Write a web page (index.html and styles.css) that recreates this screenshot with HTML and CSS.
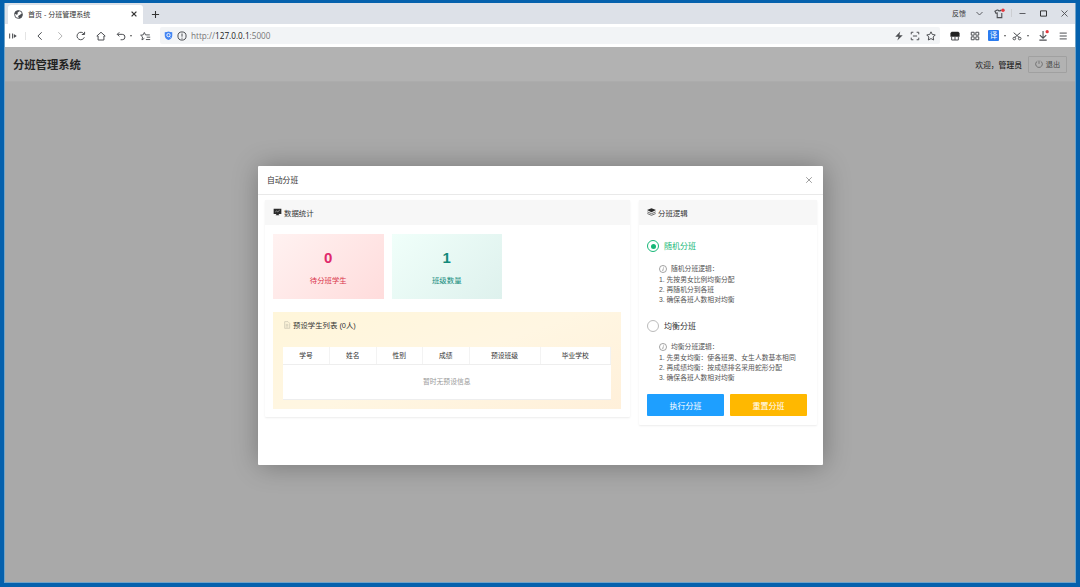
FILE: index.html
```html
<!DOCTYPE html>
<html lang="zh-CN">
<head>
  <meta charset="UTF-8">
  <title>首页 - 分班管理系统</title>
  <link rel="stylesheet" href="styles.css">
</head>
<body>
  <div class="window">
    <div class="tab-bar">
      <div class="tab">
        <svg class="favicon" viewBox="0 0 16 16"><circle cx="8" cy="8" r="7" fill="#fff" stroke="#4a4d52" stroke-width="1.6"/><path fill="#4a4d52" stroke="none" d="M1 7c2 0 3 2 5 1 2-2-1-3 1-4 2 0 2-2 2-3C5 0 1 3 1 7zM9 15c0-2-3-3-1-5 2-1 3-1 4-3 2-1 3 0 3 1 0 4-3 7-6 7z"/></svg>
        <span class="tab-title">首页 - 分班管理系统</span>
        <svg class="tab-close" viewBox="0 0 10 10"><path d="M2 2l6 6M8 2l-6 6"/></svg>
      </div>
      <svg class="tab-add" viewBox="0 0 10 10"><path d="M5 1v8M1 5h8"/></svg>
      <div class="window-tools">
        <span class="feedback">反馈</span>
        <svg viewBox="0 0 12 12"><path d="M2 4l4 4 4-4"/></svg>
        <svg class="skin" viewBox="0 0 12 12"><path d="M4 2L1 3.500l1.200 2.300L3.500 5.500V10.500h5V5.500M4 2c1 1.500 3 1.500 4 0"/><circle class="dot-red" cx="9.800" cy="2.500" r="1.900"/></svg>
        <i class="line"></i>
        <svg viewBox="0 0 12 12"><path d="M2 6h8"/></svg>
        <svg class="max" viewBox="0 0 12 12"><path d="M2 2.500h8v7H2z"/></svg>
        <svg viewBox="0 0 12 12"><path d="M2 2l8 8M10 2l-8 8"/></svg>
      </div>
    </div>

    <div class="toolbar">
      <div class="nav-tools">
        <svg class="side" viewBox="0 0 12 12"><path d="M2 3v6M5.500 3v6"/><path class="solid" d="M7 3.500L10.500 6 7 8.500z"/></svg>
        <i class="line"></i>
        <svg viewBox="0 0 12 12"><path d="M8 1.500L3.500 6 8 10.500"/></svg>
        <svg class="off" viewBox="0 0 12 12"><path d="M4 1.500L8.500 6 4 10.500"/></svg>
        <svg viewBox="0 0 12 12"><path d="M10 7.500A4.500 4.500 0 1 1 9.500 3.500M10.300 1v3.200H7"/></svg>
        <svg viewBox="0 0 12 12"><path d="M1 6l5-4.500L11 6H9.500v4.800h-7V6z"/></svg>
        <svg viewBox="0 0 12 12"><path d="M4 1.500L1.500 4 4 6.500M1.500 4h6a3 3 0 0 1 0 6.500H5.500"/></svg>
      </div>
      <i class="caret"></i>
      <svg class="fav-list" viewBox="0 0 14 12"><path d="M5.500 9L2.500 11l.800-3.800L.800 5l3.200-.4L5.500 1.500 7 4.600h5.500M8.500 7.500H13M7.500 10.500H13"/></svg>
      <div class="address">
        <svg class="shield" viewBox="0 0 12 12"><path d="M1 1.500Q4 1.500 6 .5q2 1 5 1V6q0 4-5 6-5-2-5-6z" fill="#4285f4"/><circle cx="6" cy="5.500" r="2.200" fill="none" stroke="#fff" stroke-width="1.200"/><path d="M7 7l1.500 1.500" stroke="#fff"/></svg>
        <svg class="info" viewBox="0 0 12 12"><circle cx="6" cy="6" r="4.900"/><path d="M6 3v3.800M6 8v1.200"/></svg>
        <span class="url">http://<b>127.0.0.1</b>:5000</span>
        <div class="address-tools">
          <svg viewBox="0 0 12 12"><path class="solid" d="M7.500 .5L1.500 7H5.500L4 11.500 10.500 5H6.500z"/></svg>
          <svg viewBox="0 0 12 12"><path d="M1.500 4V1.500H4M8 1.500h2.500V4M10.500 8v2.500H8M4 10.500H1.500V8M3.500 6h5"/></svg>
          <svg viewBox="0 0 12 12"><path d="M6 1l1.600 3.200 3.500.5-2.500 2.500.6 3.600L6 9.100l-3.200 1.700.6-3.600L.9 4.700l3.500-.5z"/></svg>
        </div>
      </div>
      <div class="ext-tools">
        <svg class="ext-shop" viewBox="0 0 12 12"><path class="dark" d="M2 1h8l1.500 1.500V7H.5V2.500z"/><path d="M2 7v3.800h8V7M6 7v3.800"/></svg>
        <svg class="ext-grid" viewBox="0 0 12 12"><path d="M1.500 1.500h3.500v3.500h-3.500zM7 1.500h3.500v3.500H7zM1.500 7h3.500v3.500h-3.500zM7 7h3.500v3.500H7z"/></svg>
        <span class="translate">译</span>
        <i class="caret"></i>
        <svg class="cut" viewBox="0 0 12 12"><path d="M2 2l7 6M10 2L3 8"/><circle cx="2.800" cy="9" r="1.600"/><circle cx="9.200" cy="9" r="1.600"/></svg>
        <i class="caret"></i>
        <svg class="download" viewBox="0 0 12 12"><path d="M5.500 1v7.500M2 5.500L5.500 9 9 5.500M1.500 11h8"/><circle class="dot-red" cx="10" cy="1.800" r="1.800"/></svg>
        <svg class="menu" viewBox="0 0 12 12"><path d="M2 2.500h8.500M2 6h8.500M2 9.500h8.500"/></svg>
      </div>
    </div>

    <div class="page">
      <div class="page-header">
        <h1>分班管理系统</h1>
        <span class="welcome">欢迎，<b>管理员</b></span>
        <button class="logout">
          <svg viewBox="0 0 12 12"><path d="M3.500 1.800a5 5 0 1 0 5 0M6 .8v5"/></svg>退出
        </button>
      </div>

      <div class="page-body">
        <div class="modal">
          <div class="modal-header">
            <span>自动分班</span>
            <svg viewBox="0 0 10 10"><path d="M1.500 1.500l7 7M8.500 1.500l-7 7"/></svg>
          </div>
          <div class="modal-body">
            <div class="card card-stats">
              <div class="card-header">
                <svg viewBox="0 0 14 12"><path fill="#2b2b2b" d="M1 1h12v8H8.500l1.500 2H4l1.500-2H1z"/><path d="M3.500 6l2-1.500 2 1.200L10.500 3" fill="none" stroke="#aaa"/></svg>
                数据统计
              </div>
              <div class="card-body">
                <div class="stats">
                  <div class="stat stat-red">
                    <div class="stat-number">0</div>
                    <div class="stat-label">待分班学生</div>
                  </div>
                  <div class="stat stat-green">
                    <div class="stat-number">1</div>
                    <div class="stat-label">班级数量</div>
                  </div>
                </div>
                <div class="preset">
                  <div class="preset-title">
                    <svg viewBox="0 0 12 12"><path d="M2.500 1h5L10 3.500V11H2.500zM4 5h4M4 7h4M4 9h4"/></svg>
                    预设学生列表 (0人)
                  </div>
                  <table>
                    <thead>
                      <tr>
                        <th class="col-s">学号</th>
                        <th class="col-s">姓名</th>
                        <th class="col-s">性别</th>
                        <th class="col-s">成绩</th>
                        <th class="col-m">预设班级</th>
                        <th>毕业学校</th>
                      </tr>
                    </thead>
                    <tbody>
                      <tr><td colspan="6">暂时无预设信息</td></tr>
                    </tbody>
                  </table>
                </div>
              </div>
            </div>

            <div class="card card-logic">
              <div class="card-header">
                <svg viewBox="0 0 14 12"><path fill="#2b2b2b" d="M7 0l7 3-7 3.200L0 3z"/><path d="M.5 5.800L7 8.600l6.500-2.800M.5 8.400L7 11.200l6.500-2.800" fill="none" stroke="#555" stroke-width="1.300"/></svg>
                分班逻辑
              </div>
              <div class="card-body">
                <div class="radio checked"><i></i><span>随机分班</span></div>
                <div class="logic">
                  <p class="logic-title"><svg viewBox="0 0 12 12"><circle cx="6" cy="6" r="5.300"/><path d="M6.600 5L5.500 9M6.800 2.800v1"/></svg>随机分班逻辑：</p>
                  <p>1. 先按男女比例均衡分配</p>
                  <p>2. 再随机分到各班</p>
                  <p>3. 确保各班人数相对均衡</p>
                </div>
                <div class="radio"><i></i><span>均衡分班</span></div>
                <div class="logic logic-balance">
                  <p class="logic-title"><svg viewBox="0 0 12 12"><circle cx="6" cy="6" r="5.300"/><path d="M6.600 5L5.500 9M6.800 2.800v1"/></svg>均衡分班逻辑：</p>
                  <p>1. 先男女均衡：使各班男、女生人数基本相同</p>
                  <p>2. 再成绩均衡：按成绩排名采用蛇形分配</p>
                  <p>3. 确保各班人数相对均衡</p>
                </div>
                <div class="buttons">
                  <button class="btn btn-blue">执行分班</button>
                  <button class="btn btn-orange">重置分班</button>
                </div>
              </div>
            </div>
          </div>
        </div>
      </div>
    </div>
  </div>
</body>
</html>
```
FILE: styles.css
```css
* {
  box-sizing: border-box;
}

body {
  margin: 0;
  height: 587px;
  padding: 3px 4px 4px;
  background: #0561ad;
  font-family: "Liberation Sans", "Noto Sans CJK SC", sans-serif;
  font-size: 7.5px;
  color: #333;
  overflow: hidden;
}

svg {
  display: block;
  flex: none;
  fill: none;
  stroke: #4d4f53;
  stroke-width: 1.2;
}

button {
  font-family: inherit;
  padding: 0;
}

p {
  margin: 0;
}

.window {
  height: 580px;
  display: flex;
  flex-direction: column;
  background: #a9a9a9;
  border: 1px solid #6fa3c8;
  border-top: 0;
}

.line {
  width: 1px;
  height: 8px;
  background: #ccced2;
}

.caret {
  width: 0;
  border: 1.5px solid transparent;
  border-top: 2px solid #555;
  border-bottom: 0;
}

.dot-red {
  fill: #e5393f;
  stroke: none;
}

.solid {
  fill: #4d4f53;
  stroke: none;
}

.dark {
  fill: #222;
  stroke: none;
}

/* browser tabs */
.tab-bar {
  height: 21px;
  display: flex;
  align-items: center;
  background: #dde1e8;
}

.tab {
  align-self: flex-end;
  width: 135px;
  height: 19px;
  margin-left: 3px;
  padding: 0 5px 1px 6px;
  display: flex;
  align-items: center;
  background: #fff;
  border-radius: 3px 3px 0 0;
}

.favicon {
  width: 9px;
  height: 9px;
  margin-right: 5px;
}

.tab-title {
  flex: 1;
  font-size: 7px;
}

.tab-close {
  width: 8px;
  height: 8px;
  stroke: #333;
  stroke-width: 1.6;
}

.tab-add {
  width: 9px;
  height: 9px;
  margin-left: 8px;
  margin-top: 2px;
  stroke: #333;
}

.window-tools {
  margin-left: auto;
  margin-right: 6px;
  padding-bottom: 1px;
  display: flex;
  align-items: center;
}

.window-tools svg {
  width: 9px;
  height: 9px;
  margin-left: 12px;
}

.window-tools .feedback {
  font-size: 7px;
  margin-right: -3px;
}

.window-tools .line {
  margin: 0 -6px 0 6px;
}

.window-tools .skin {
  width: 11px;
  height: 11px;
  margin-left: 10px;
}

.window-tools .max {
  stroke: #222;
}

/* browser toolbar */
.toolbar {
  height: 23px;
  display: flex;
  align-items: center;
  background: #fff;
}

.nav-tools {
  display: flex;
  align-items: center;
}

.nav-tools svg {
  width: 10px;
  height: 10px;
  margin-left: 10.4px;
}

.nav-tools .side {
  margin-left: 3px;
}

.nav-tools .line {
  margin-left: 7px;
  margin-right: -1.5px;
  background: #e4e4e4;
}

.nav-tools .off {
  stroke: #b5b5b5;
}

.toolbar .caret {
  margin-left: 4px;
}

.fav-list {
  width: 11px;
  height: 10px;
  margin-left: 8px;
}

.address {
  width: 780px;
  height: 17px;
  margin-left: auto;
  padding-left: 4px;
  display: flex;
  align-items: center;
  background: #f2f4f6;
  border-radius: 2px;
}

.shield {
  width: 9px;
  height: 9px;
  stroke: none;
}

.info {
  width: 10px;
  height: 10px;
  margin-left: 4px;
}

.url {
  margin-left: 4px;
  padding-bottom: 1px;
  font-family: "Open Sans", sans-serif;
  font-size: 8.2px;
  color: #777;
}

.url b {
  font-weight: 400;
  color: #222;
}

.address-tools {
  margin-left: auto;
  margin-right: 4px;
  display: flex;
  gap: 6px;
}

.address-tools svg {
  width: 10px;
  height: 10px;
}

.ext-tools {
  width: 135px;
  padding-left: 10px;
  display: flex;
  align-items: center;
}

.ext-tools svg {
  width: 10px;
  height: 10px;
}

.ext-tools .ext-grid {
  margin-left: 10px;
}

.translate {
  width: 11px;
  height: 11px;
  margin-left: 8px;
  border-radius: 1px;
  background: #2b7cf0;
  color: #fff;
  font-size: 7.5px;
  line-height: 11px;
  text-align: center;
}

.ext-tools .caret {
  margin-left: 5px;
}

.ext-tools .cut {
  margin-left: 6px;
}

.ext-tools .download {
  width: 11px;
  height: 11px;
  margin-left: 9px;
}

.ext-tools .menu {
  margin-left: 9px;
}

/* page */
.page {
  flex: 1;
  display: flex;
  flex-direction: column;
}

.page-header {
  height: 35px;
  padding: 0 8px;
  display: flex;
  align-items: center;
  background: #b2b2b2;
  border-bottom: 1px solid #acacac;
}

.page-header h1 {
  margin: 0;
  font-size: 11.3px;
  color: #222;
}

.welcome {
  margin-left: auto;
  font-size: 7.8px;
  color: #222;
}

.welcome b {
  font-weight: 500;
}

.logout {
  width: 39px;
  height: 17px;
  margin-left: 6px;
  display: flex;
  align-items: center;
  justify-content: center;
  gap: 3px;
  border: 1px solid #a0a0a0;
  border-radius: 1px;
  background: transparent;
  color: #444;
  font-size: 7.2px;
}

.logout svg {
  width: 8px;
  height: 8px;
  stroke: #555;
  stroke-width: 1;
}

.page-body {
  flex: 1;
  padding-top: 84px;
}

/* modal */
.modal {
  width: 565px;
  height: 299px;
  margin-left: 253px;
  background: #fff;
  border-radius: 1px;
  box-shadow: 1px 1px 27px rgba(0, 0, 0, 0.3);
}

.modal-header {
  height: 29px;
  padding: 0 10px 1px 9px;
  display: flex;
  align-items: center;
  justify-content: space-between;
  border-bottom: 1px solid #e9e9e9;
  font-size: 7.8px;
}

.modal-header svg {
  width: 8px;
  height: 8px;
  stroke: #888;
  stroke-width: 1;
}

.modal-body {
  padding: 5px 6px 0 7px;
  display: flex;
  align-items: flex-start;
  justify-content: space-between;
}

.card {
  background: #fff;
  border-radius: 1px;
  box-shadow: 0 1px 2px rgba(0, 0, 0, 0.08);
}

.card-stats {
  width: 365px;
  height: 217px;
}

.card-logic {
  width: 178px;
  height: 225px;
}

.card-header {
  height: 25px;
  padding: 0 0 1px 8px;
  display: flex;
  align-items: center;
  gap: 2px;
  background: #f7f7f7;
  font-size: 7.4px;
}

.card-header svg {
  width: 9px;
  height: 8px;
  stroke: none;
}

.card-body {
  padding: 9px 9px 0 8px;
}

.stats {
  display: flex;
  gap: 8px;
}

.stat {
  width: 110.5px;
  height: 65px;
  padding-top: 15px;
  text-align: center;
}

.stat-red {
  background: linear-gradient(135deg, #fff2f1, #ffdcdc);
  color: #d9344a;
}

.stat-green {
  background: linear-gradient(135deg, #f0fffa, #def1ed);
  color: #128a7b;
}

.stat-number {
  font-size: 15px;
  line-height: 18px;
  font-weight: 700;
}

.stat-red .stat-number {
  color: #e0286b;
}

.stat-label {
  margin-top: 8px;
  font-size: 7.4px;
  line-height: 11px;
}

.preset {
  height: 97px;
  margin-top: 13px;
  padding: 7px 10px;
  background: linear-gradient(160deg, #fff6da, #fff6e2 50%, #fff0da);
}

.preset-title {
  height: 11px;
  display: flex;
  align-items: center;
  gap: 2px;
  font-size: 7.4px;
}

.preset-title svg {
  width: 8px;
  height: 8px;
  stroke: #c4c0ae;
  stroke-width: 1;
}

table {
  width: 328px;
  margin-top: 17px;
  table-layout: fixed;
  border-collapse: collapse;
  background: #fff;
}

th, td {
  padding: 0;
  border-bottom: 1px solid #eee;
  text-align: center;
}

th {
  height: 17px;
  border-right: 1px solid #f3f3f3;
  font-size: 6.8px;
  font-weight: 400;
}

td {
  height: 35px;
  padding-bottom: 1px;
  font-size: 6.8px;
  color: #999;
}

.col-s {
  width: 46.5px;
}

.col-m {
  width: 71px;
}

/* logic */
.card-logic .card-body {
  padding-top: 14px;
}

.radio {
  height: 13px;
  display: flex;
  align-items: center;
  gap: 5px;
  font-size: 8px;
}

.radio span {
  padding-bottom: 1px;
}

.radio i {
  width: 12px;
  height: 12px;
  padding: 2.5px;
  border: 1px solid #bbb;
  border-radius: 50%;
}

.radio.checked {
  color: #16b777;
}

.radio.checked i {
  border-color: #16b777;
  background: #16b777 content-box;
}

.logic {
  height: 54px;
  margin-bottom: 13px;
  padding: 11px 0 0 12px;
  color: #555;
  font-size: 6.8px;
  line-height: 10.2px;
  white-space: nowrap;
}

.logic-balance {
  height: 52px;
  margin-bottom: 0;
  padding-top: 9px;
}

.logic-title {
  height: 12px;
  display: flex;
  align-items: center;
  gap: 4px;
}

.logic-title svg {
  width: 8px;
  height: 8px;
  stroke: #777;
  stroke-width: 1;
}

.buttons {
  display: flex;
  gap: 6px;
  margin-top: 10px;
}

.btn {
  width: 77px;
  height: 22px;
  border: 0;
  border-radius: 1px;
  color: #fff;
  font-size: 8px;
}

.btn-blue {
  background: #1e9fff;
}

.btn-orange {
  background: #ffb800;
}
```
